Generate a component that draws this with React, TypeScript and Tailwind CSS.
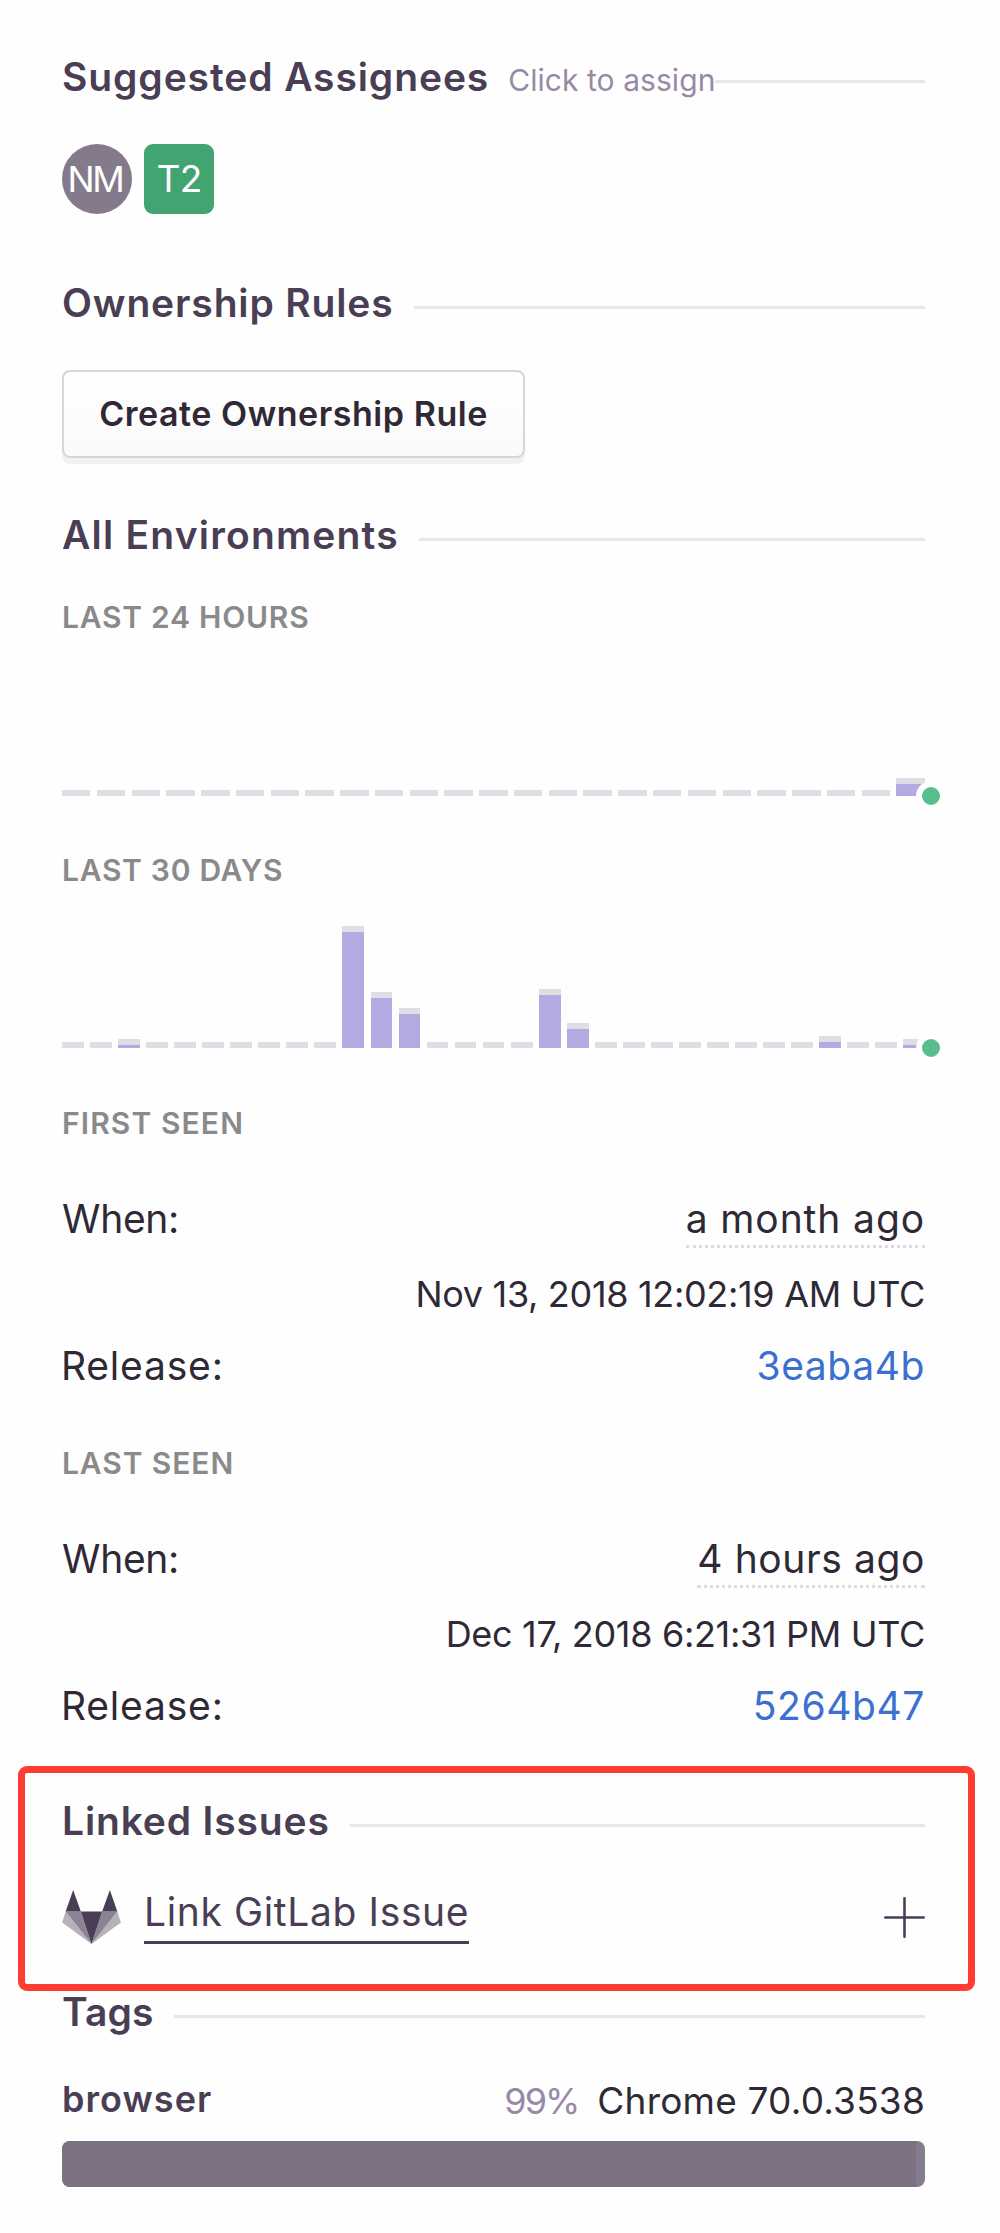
import type { ReactNode } from "react";

function Heading({ title, tracking, hint }: { title: string; tracking: string; hint?: string }) {
  return (
    <div className="flex h-12 items-center">
      <h2 className="flex items-baseline whitespace-nowrap text-[39px] leading-[48px] font-semibold text-[#493e54]">
        <span className={tracking}>{title}</span>
        {hint && (
          <span className="ml-[19px] text-[30px] leading-none font-normal tracking-[0.06px] text-[#9889a6]">{hint}</span>
        )}
      </h2>
      <div className={`mt-2 h-[3px] flex-1 bg-[#e7e6ec] ${hint ? "ml-0" : "ml-5"}`} />
    </div>
  );
}

function Label({ children, tracking }: { children: ReactNode; tracking: string }) {
  return (
    <h3 className={`h-10 whitespace-nowrap text-[30px] leading-10 font-semibold text-[#8a8a8a] ${tracking}`}>
      {children}
    </h3>
  );
}

type Bar = { total: number; value: number };

function Chart({ bars, gap }: { bars: Bar[]; gap: string }) {
  return (
    <div className="relative h-full">
      <div className={`flex h-full items-end ${gap}`}>
        {bars.map((bar, i) => (
          <div key={i} className="flex flex-1 flex-col" style={{ height: bar.total }}>
            <div className="flex-1 bg-[#e0dde4]" />
            <div className="bg-[#b2aae0]" style={{ height: bar.value }} />
          </div>
        ))}
      </div>
      <div className="absolute -right-[21px] -bottom-[15px] size-[30px] rounded-full border-6 border-[#fefefe] bg-[#57be8c]" />
    </div>
  );
}

const bar = (value: number): Bar => ({ total: value + 6, value });
const day: Bar[] = Array.from({ length: 25 }, (_, i) => bar(i === 24 ? 12 : 0));
const monthValues: Record<number, number> = { 2: 3, 10: 116, 11: 50, 12: 34, 17: 53, 18: 19, 27: 6, 30: 3 };
const month: Bar[] = Array.from({ length: 31 }, (_, i) => bar(monthValues[i] ?? 0));

function Seen({ ago, agoTracking, date, release }: { ago: string; agoTracking: string; date: string; release: string }) {
  return (
    <div className="mt-[52px] whitespace-nowrap text-[39px] leading-[48px] text-[#2f2936]">
      <div className="flex h-[53px] items-start justify-between">
        <span className="tracking-[-0.3px]">When:</span>
        <span className={`h-[53px] border-b-3 border-dotted border-[#dddae2] ${agoTracking}`}>{ago}</span>
      </div>
      <div className="mt-6 h-11 text-right text-[36px] leading-11 tracking-[-0.32px]">{date}</div>
      <div className="mt-[26px] flex h-12 justify-between">
        <span className="-ml-px tracking-[0.8px]">{"Release:"}</span>
        <a className="tracking-[0.6px] text-[#3b6fd0]">{release}</a>
      </div>
    </div>
  );
}

function GitLabIcon() {
  return (
    <svg viewBox="0 0 58.7 54" className="h-[54px] w-[59px]">
      <path d="M3.5 21.5 0 32.5 29.35 54ZM55.2 21.5 58.7 32.5 29.35 54Z" fill="#b7b1bb" />
      <path d="M3.5 21.5H18.7L29.35 54ZM55.2 21.5H40L29.35 54Z" fill="#8b8392" />
      <path d="M18.7 21.5H40L29.35 54ZM3.5 21.5 11 0 18.7 21.5ZM55.2 21.5 47.7 0 40 21.5Z" fill="#493e54" />
    </svg>
  );
}

export default function App() {
  return (
    <main className="min-h-[2233px] w-[1000px] bg-[#fefefe] pt-[53px] pr-[75px] pl-[62px] font-['Inter',sans-serif]">
      <Heading title="Suggested Assignees" tracking="tracking-[0.9px]" hint="Click to assign" />
      <div className="mt-[43px] flex gap-3 text-[37px] text-white">
        <div className="flex size-[70px] items-center justify-center rounded-full bg-[#857a8c] text-[36px] tracking-[-2.4px]">
          <span className="-ml-1">NM</span>
        </div>
        <div className="flex size-[70px] items-center justify-center rounded-[9px] bg-[#42a471] tracking-[-0.8px]">T2</div>
      </div>

      <div className="mt-[65px]">
        <Heading title="Ownership Rules" tracking="tracking-[0.85px]" />
      </div>
      <button className="mt-[43px] flex h-[88px] w-[463px] items-center justify-center rounded-lg border-[2.5px] border-[#d9d3e1] bg-linear-to-b from-white to-[#fafafb] text-[34px] font-semibold tracking-[0.54px] whitespace-nowrap text-[#2f2936] shadow-[0_6px_0_#f1f1f2]">
        <span className="-mt-0.5">Create Ownership Rule</span>
      </button>

      <div className="mt-[53px]">
        <Heading title="All Environments" tracking="tracking-[1.2px]" />
      </div>
      <div className="mt-[38px]">
        <Label tracking="tracking-[0.75px]">LAST 24 HOURS</Label>
      </div>
      <div className="mt-[39px] h-[120px]">
        <Chart bars={day} gap="gap-[6.3px]" />
      </div>
      <div className="mt-[54px]">
        <Label tracking="tracking-[0.7px]">LAST 30 DAYS</Label>
      </div>
      <div className="mt-9 h-[122px]">
        <Chart bars={month} gap="gap-[6.3px]" />
      </div>

      <div className="mt-[55px]">
        <Label tracking="tracking-[1.1px]">FIRST SEEN</Label>
      </div>
      <Seen ago="a month ago" agoTracking="tracking-[0.9px]" date="Nov 13, 2018 12:02:19 AM UTC" release="3eaba4b" />
      <div className="mt-[53px]">
        <Label tracking="tracking-[0.9px]">LAST SEEN</Label>
      </div>
      <Seen ago="4 hours ago" agoTracking="tracking-[0.6px]" date="Dec 17, 2018 6:21:31 PM UTC" release="5264b47" />

      <section className="mt-9 -mr-[50px] -ml-[44px] h-[225px] rounded-[9px] border-7 border-[#ff3b32] pt-[24px] pr-[43px] pl-[37px]">
        <Heading title="Linked Issues" tracking="tracking-[0.85px]" />
        <div className="mt-[43px] flex h-14 items-end">
          <GitLabIcon />
          <a className="ml-[23px] h-14 border-b-3 border-[#493e54] whitespace-nowrap text-[39px] leading-[48px] tracking-[0.63px] text-[#493e54]">
            Link GitLab Issue
          </a>
          <svg viewBox="0 0 41 41" className="mb-1.5 ml-auto size-[41px]" stroke="#493e54" strokeWidth="2.6" strokeLinecap="round">
            <path d="M20.5 1.3V39.7M1.3 20.5H39.7" />
          </svg>
        </div>
      </section>

      <div className="-mt-[3px]">
        <Heading title="Tags" tracking="tracking-[0.1px]" />
      </div>
      <div className="mt-[41px] flex h-12 whitespace-nowrap text-[37px] leading-[48px]">
        <span className="-mt-0.5 text-[36px] font-semibold tracking-[1.06px] text-[#493e54]">browser</span>
        <span className="ml-auto text-[36px] tracking-[-2px] text-[#9889a6]">99%</span>
        <span className="ml-[19px] tracking-[0.2px] text-[#2f2936]">Chrome 70.0.3538</span>
      </div>
      <div className="mt-4 flex h-[46px] overflow-hidden rounded-lg bg-[#857c8e]">
        <div className="w-[99%] bg-[#7c7282]" />
      </div>
    </main>
  );
}
